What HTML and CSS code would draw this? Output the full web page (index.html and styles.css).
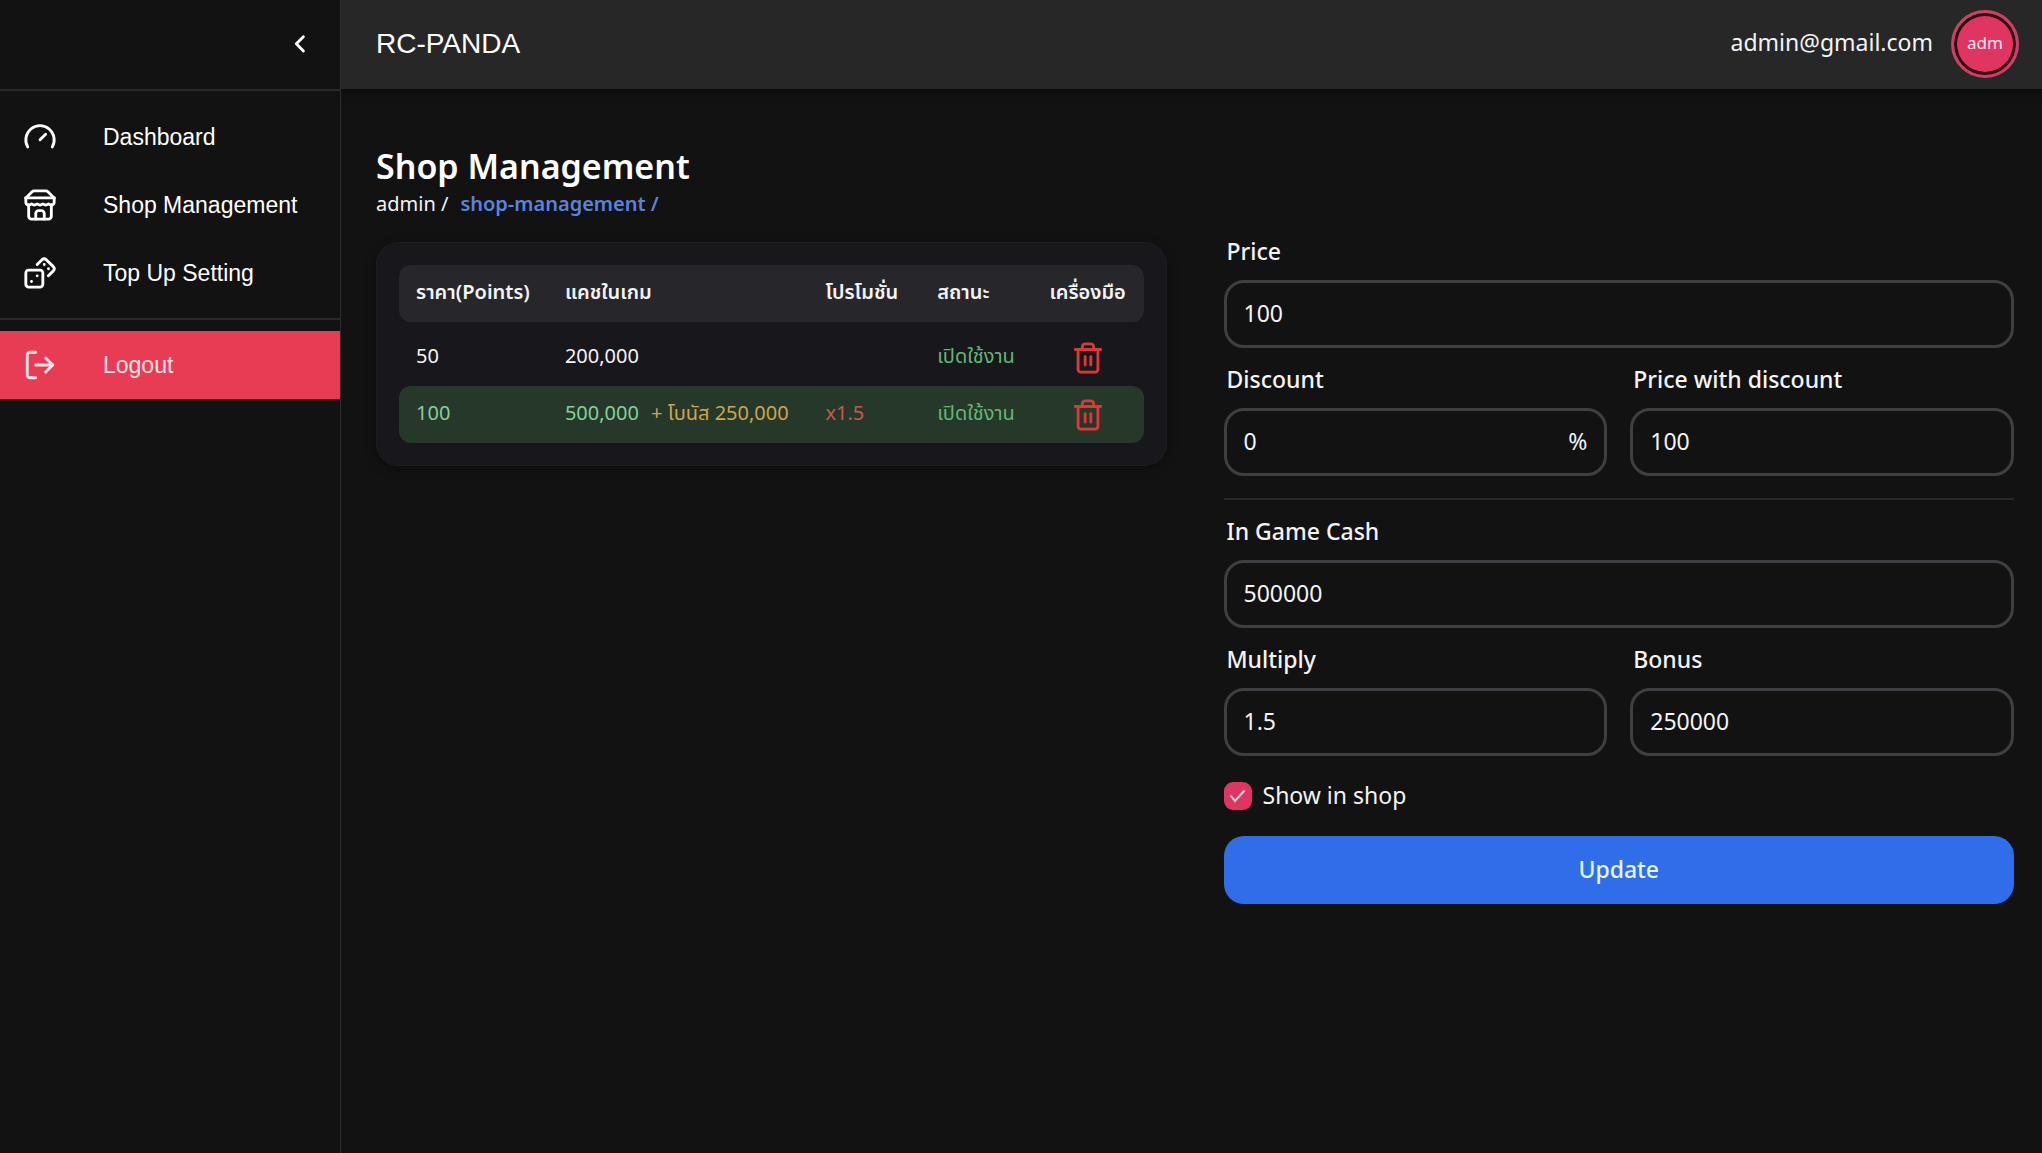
FILE: index.html
```html
<!DOCTYPE html>
<html lang="en">
<head>
<meta charset="utf-8">
<title>RC-PANDA</title>
<link rel="stylesheet" href="styles.css">
</head>
<body>
<div class="app">
  <aside class="sidebar">
    <div class="sidebar-top">
      <button class="collapse" type="button" aria-label="Collapse menu">
        <svg class="chevron" viewBox="0 0 24 24"><path d="m14.4 6.9-5 5 5 5"/></svg>
      </button>
    </div>
    <nav class="nav">
      <a class="nav-item" href="#dashboard">
        <svg class="icon" viewBox="0 0 24 24"><path d="m12 14 4-4"/><path d="M3.34 19a10 10 0 1 1 17.32 0"/></svg>
        Dashboard
      </a>
      <a class="nav-item" href="#shop">
        <svg class="icon" viewBox="0 0 24 24"><path d="m2 7 4.41-4.41A2 2 0 0 1 7.83 2h8.34a2 2 0 0 1 1.42.59L22 7"/><path d="M4 12v8a2 2 0 0 0 2 2h12a2 2 0 0 0 2-2v-8"/><path d="M15 22v-4a2 2 0 0 0-2-2h-2a2 2 0 0 0-2 2v4"/><path d="M2 7h20"/><path d="M22 7v3a2 2 0 0 1-2 2a2.7 2.7 0 0 1-1.59-.63.7.7 0 0 0-.82 0A2.7 2.7 0 0 1 16 12a2.7 2.7 0 0 1-1.59-.63.7.7 0 0 0-.82 0A2.7 2.7 0 0 1 12 12a2.7 2.7 0 0 1-1.59-.63.7.7 0 0 0-.82 0A2.7 2.7 0 0 1 8 12a2.7 2.7 0 0 1-1.59-.63.7.7 0 0 0-.82 0A2.7 2.7 0 0 1 4 12a2 2 0 0 1-2-2V7"/></svg>
        Shop Management
      </a>
      <a class="nav-item" href="#topup">
        <svg class="icon" viewBox="0 0 24 24"><rect width="12" height="12" x="2" y="10" rx="2"/><path d="m17.92 14 3.5-3.5a2.24 2.24 0 0 0 0-3l-5-4.92a2.24 2.24 0 0 0-3 0L10 6"/><path d="M6 18h.01M10 14h.01M15 6h.01M18 9h.01"/></svg>
        Top Up Setting
      </a>
    </nav>
    <a class="nav-item logout" href="#logout">
      <svg class="icon" viewBox="0 0 24 24"><path d="M9 21H5a2 2 0 0 1-2-2V5a2 2 0 0 1 2-2h4"/><path d="m16 17 5-5-5-5"/><path d="M21 12H9"/></svg>
      Logout
    </a>
  </aside>

  <div class="page">
    <header class="topbar">
      <span class="brand">RC-PANDA</span>
      <div class="account">
        <span class="email">admin@gmail.com</span>
        <button class="avatar" type="button">adm</button>
      </div>
    </header>

    <main class="content">
      <h1 class="title">Shop Management</h1>
      <div class="crumbs">
        <a class="crumb" href="#admin">admin /</a>
        <a class="crumb current" href="#shop">shop-management /</a>
      </div>

      <div class="columns">
        <section class="card">
          <table class="table" lang="th">
            <colgroup>
              <col class="col-price"><col class="col-cash"><col class="col-promo"><col class="col-status"><col class="col-tools">
            </colgroup>
            <thead>
              <tr><th>ราคา(Points)</th><th>แคชในเกม</th><th>โปรโมชั่น</th><th>สถานะ</th><th class="tools">เครื่องมือ</th></tr>
            </thead>
            <tbody>
              <tr>
                <td>50</td><td>200,000</td><td></td><td class="enabled">เปิดใช้งาน</td>
                <td class="tools"><button class="delete" type="button" aria-label="Delete">
                  <svg class="icon" viewBox="0 0 24 24"><path d="M3 6h18M19 6v14a2 2 0 0 1-2 2H7a2 2 0 0 1-2-2V6M8 6V4a2 2 0 0 1 2-2h4a2 2 0 0 1 2 2v2M10 11v6M14 11v6"/></svg></button></td>
              </tr>
              <tr class="selected">
                <td>100</td><td>500,000 <span class="bonus">+ โบนัส 250,000</span></td><td class="multiplier">x1.5</td><td class="enabled">เปิดใช้งาน</td>
                <td class="tools"><button class="delete" type="button" aria-label="Delete">
                  <svg class="icon" viewBox="0 0 24 24"><path d="M3 6h18M19 6v14a2 2 0 0 1-2 2H7a2 2 0 0 1-2-2V6M8 6V4a2 2 0 0 1 2-2h4a2 2 0 0 1 2 2v2M10 11v6M14 11v6"/></svg></button></td>
              </tr>
            </tbody>
          </table>
        </section>

        <form class="form">
          <div class="field">
            <label for="price">Price</label>
            <div class="box"><input id="price" type="text" value="100"></div>
          </div>
          <div class="pair">
            <div class="field">
              <label for="discount">Discount</label>
              <div class="box"><input id="discount" type="text" value="0"><span>%</span></div>
            </div>
            <div class="field">
              <label for="discounted">Price with discount</label>
              <div class="box"><input id="discounted" type="text" value="100"></div>
            </div>
          </div>
          <hr class="rule">
          <div class="field">
            <label for="cash">In Game Cash</label>
            <div class="box"><input id="cash" type="text" value="500000"></div>
          </div>
          <div class="pair">
            <div class="field">
              <label for="multiply">Multiply</label>
              <div class="box"><input id="multiply" type="text" value="1.5"></div>
            </div>
            <div class="field">
              <label for="bonus">Bonus</label>
              <div class="box"><input id="bonus" type="text" value="250000"></div>
            </div>
          </div>
          <label class="check">
            <span class="check-mark">
              <input type="checkbox" checked>
              <svg viewBox="0 0 28 28"><path d="m7 14 4 5 9-10"/></svg>
            </span>
            <span class="check-text">Show in shop</span>
          </label>
          <button class="submit" type="button">Update</button>
        </form>
      </div>
    </main>
  </div>
</div>
</body>
</html>
```
FILE: styles.css
```css
* { box-sizing: border-box; }

body {
  margin: 0;
  background: #121212;
  color: #f4f4f5;
  font-family: "Noto Sans", "Noto Sans Thai", sans-serif;
  font-size: 23px;
}

a { color: inherit; text-decoration: none; }
button { border: 0; padding: 0; background: none; color: inherit; font: inherit; cursor: pointer; }

.app { display: flex; min-height: 100vh; }

.icon {
  display: block;
  flex: none;
  width: 34px;
  height: 34px;
  fill: none;
  stroke: currentColor;
  stroke-width: 2;
  stroke-linecap: round;
  stroke-linejoin: round;
}

/* Sidebar */
.sidebar {
  flex: none;
  position: relative;
  z-index: 1;
  width: 341px;
  background: #121212;
  border-right: 1px solid #2e2e2e;
  font-family: "Liberation Sans", Arial, sans-serif;
  color: #fff;
}
.sidebar-top {
  display: flex;
  align-items: center;
  justify-content: flex-end;
  height: 91px;
  padding: 0 23px 2px 0;
  border-bottom: 2px solid #2a2a2a;
}
.chevron {
  display: block;
  width: 34px;
  height: 34px;
  fill: none;
  stroke: #fff;
  stroke-width: 2;
  stroke-linecap: round;
  stroke-linejoin: round;
}
.nav { padding: 12px 0 11px; border-bottom: 2px solid #2a2a2a; }
.nav-item { display: flex; align-items: center; gap: 46px; height: 68px; padding-left: 23px; }
.logout { margin-top: 11px; background: #e83c55; color: #ffe4e8; }

/* Top bar */
.page { flex: 1; min-width: 0; }
.topbar {
  display: flex;
  align-items: center;
  justify-content: space-between;
  height: 89px;
  padding: 0 23px 2px 35px;
  background: #272727;
  box-shadow: 0 3px 8px rgba(0, 0, 0, .5);
}
.brand { font-family: "Liberation Sans", Arial, sans-serif; font-size: 28px; color: #fff; }
.account { display: flex; align-items: center; gap: 18px; }
.email { padding-bottom: 3px; }
.avatar {
  width: 68px;
  height: 68px;
  padding-bottom: 3px;
  border: 3px solid #c74168;
  border-radius: 50%;
  background: #e03562;
  box-shadow: inset 0 0 0 3px #30000c;
  color: #ffe4ec;
  font-size: 17px;
}

/* Content */
.content { padding: 53px 28px 40px 35px; }
.title { margin: 0; font-size: 34px; font-weight: 600; line-height: 48px; color: #fff; }
.crumbs { display: flex; gap: 12px; font-size: 20px; line-height: 28px; }
.current { color: #5b82dc; font-weight: 600; }
.columns {
  display: grid;
  grid-template-columns: 1fr 1fr;
  gap: 57px;
  align-items: start;
  margin-top: 24px;
}

/* Table */
.card {
  padding: 22px;
  border: 1px solid #1d1d20;
  border-radius: 22px;
  background: #18171c;
  box-shadow: 0 3px 12px rgba(0, 0, 0, .3);
}
.table { width: 100%; table-layout: fixed; border-collapse: separate; border-spacing: 0; font-size: 20px; }
.col-price { width: 20%; }
.col-cash { width: 35%; }
.col-promo { width: 15%; }
.table th, .table td { height: 57px; padding: 0 17px 3px; line-height: 28px; text-align: left; white-space: nowrap; }
.table th { background: #27262b; font-weight: 600; }
.table tr > :first-child { border-radius: 12px 0 0 12px; }
.table tr > :last-child { border-radius: 0 12px 12px 0; }
.table tbody::before { content: ""; display: block; height: 7px; }
.table th.tools { padding: 0 0 3px; text-align: center; }
.table td.tools { padding: 0; text-align: center; }
.selected td { background: #25382a; color: #86cf9c; }
.bonus { margin-left: 7px; color: #cfa54e; }
.table .multiplier { color: #c7584f; }
.table .enabled { color: #62b777; }
.delete { display: inline-block; vertical-align: middle; color: #dc3838; }

/* Form */
.form { display: flex; flex-direction: column; gap: 22px; }
.pair { display: grid; grid-template-columns: 1fr 1fr; gap: 23px; }
.field { display: flex; flex-direction: column; gap: 20px; min-width: 0; }
.field label { padding-left: 3px; font-weight: 500; line-height: 18px; }
.box {
  display: flex;
  align-items: center;
  height: 68px;
  padding: 0 17px 2px;
  border: 3px solid #3f3f43;
  border-radius: 20px;
}
.box input {
  flex: 1;
  min-width: 0;
  padding: 0;
  border: 0;
  outline: 0;
  background: none;
  color: inherit;
  font: inherit;
}
.rule { width: 100%; height: 2px; margin: 0; border: 0; background: #272729; }
.check { display: flex; align-items: center; gap: 11px; height: 36px; }
.check-text { padding-bottom: 3px; }
.check-mark { display: grid; width: 28px; height: 28px; }
.check-mark > * { grid-area: 1 / 1; width: 28px; height: 28px; margin: 0; }
.check-mark input { appearance: none; border-radius: 9px; background: #de3563; }
.check-mark svg { fill: none; stroke: #ffd9e4; stroke-width: 2; stroke-linecap: round; pointer-events: none; }
.submit { height: 68px; padding-bottom: 2px; border-radius: 20px; background: #306de8; color: #e6f6ff; font-weight: 500; }
```
